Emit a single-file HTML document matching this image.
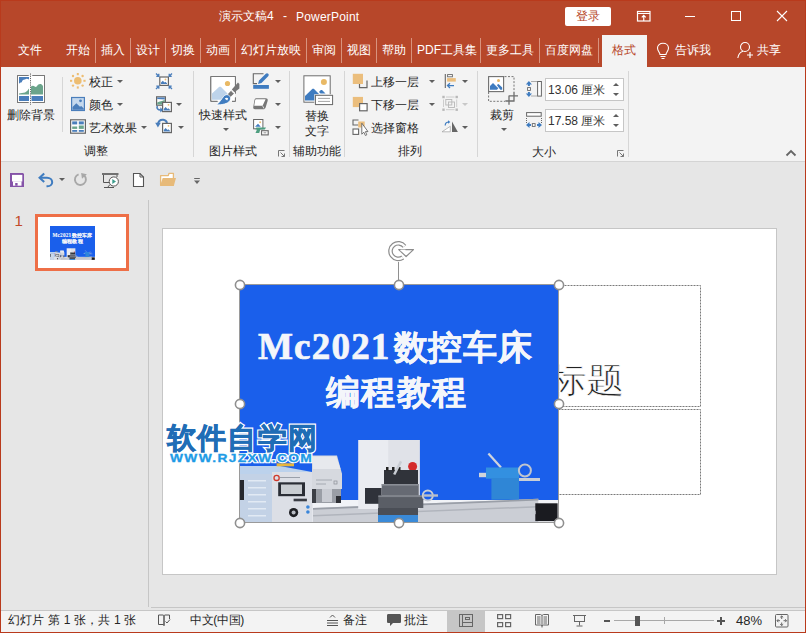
<!DOCTYPE html>
<html><head><meta charset="utf-8">
<style>
*{box-sizing:border-box}
html,body{margin:0;padding:0}
body{width:806px;height:633px;position:relative;overflow:hidden;background:#B93A1C;font-family:"Liberation Sans",sans-serif;font-size:12px;color:#262626}
.a{position:absolute}
.t{position:absolute;white-space:nowrap;line-height:1}
.w{color:#fff}
.sep{position:absolute;width:1px;background:#D8937E;top:38px;height:25px}
.gsep{position:absolute;width:1px;background:#D6D6D6}
.dd{position:absolute;width:0;height:0;border-left:3px solid transparent;border-right:3px solid transparent;border-top:3px solid #5E5E5E;margin-left:-0.5px}
.du{position:absolute;width:0;height:0;border-left:3px solid transparent;border-right:3px solid transparent;border-bottom:3px solid #5E5E5E}
.lbl{position:absolute;white-space:nowrap;line-height:1;color:#262626}
</style></head><body>
<!-- title bar -->
<div class="a" style="left:1px;top:1px;width:804px;height:66px;background:#B7472A"></div>
<div class="t w" style="left:219px;top:10px;font-size:12px">演示文稿4</div>
<div class="t w" style="left:283px;top:10px;font-size:12px">-</div>
<div class="t w" style="left:296px;top:11px;font-size:12px;letter-spacing:0.2px">PowerPoint</div>
<div class="a" style="left:565px;top:7px;width:46px;height:19px;background:#fff;border-radius:2px"></div>
<div class="t" style="left:576px;top:10px;font-size:12px;color:#B7472A">登录</div>
<!-- tabs -->
<div id="tabs">
<div class="t w" style="left:18px;top:44px">文件</div>
<div class="t w" style="left:66px;top:44px">开始</div>
<div class="sep" style="left:95px"></div>
<div class="t w" style="left:101px;top:44px">插入</div>
<div class="sep" style="left:130px"></div>
<div class="t w" style="left:136px;top:44px">设计</div>
<div class="sep" style="left:165px"></div>
<div class="t w" style="left:171px;top:44px">切换</div>
<div class="sep" style="left:200px"></div>
<div class="t w" style="left:206px;top:44px">动画</div>
<div class="sep" style="left:235px"></div>
<div class="t w" style="left:241px;top:44px">幻灯片放映</div>
<div class="sep" style="left:306px"></div>
<div class="t w" style="left:312px;top:44px">审阅</div>
<div class="sep" style="left:341px"></div>
<div class="t w" style="left:347px;top:44px">视图</div>
<div class="sep" style="left:376px"></div>
<div class="t w" style="left:382px;top:44px">帮助</div>
<div class="sep" style="left:411px"></div>
<div class="t w" style="left:417px;top:44px">PDF工具集</div>
<div class="sep" style="left:480px"></div>
<div class="t w" style="left:486px;top:44px">更多工具</div>
<div class="sep" style="left:539px"></div>
<div class="t w" style="left:545px;top:44px">百度网盘</div>
<div class="sep" style="left:598px"></div>
<div class="a" style="left:602px;top:35px;width:45px;height:32px;background:#F3F3F3"></div>
<div class="t" style="left:612px;top:44px;color:#B7472A">格式</div>
<div class="t w" style="left:675px;top:44px">告诉我</div>
<div class="t w" style="left:757px;top:44px">共享</div>
</div>
<!-- ribbon -->
<div class="a" style="left:1px;top:67px;width:804px;height:94px;background:#F3F3F3"></div>
<div class="a" style="left:1px;top:161px;width:804px;height:1px;background:#D4D4D4"></div>

<!-- ribbon labels -->
<div class="t" style="left:7px;top:109px">删除背景</div>
<div class="gsep" style="left:62px;top:77px;height:55px"></div>
<div class="t" style="left:89px;top:76px">校正</div><div class="dd" style="left:117px;top:80px"></div>
<div class="t" style="left:89px;top:99px">颜色</div><div class="dd" style="left:117px;top:103px"></div>
<div class="t" style="left:89px;top:122px">艺术效果</div><div class="dd" style="left:141px;top:126px"></div>
<div class="dd" style="left:176px;top:103px"></div>
<div class="dd" style="left:178px;top:126px"></div>
<div class="lbl" style="left:84px;top:145px">调整</div>
<div class="gsep" style="left:193px;top:71px;height:86px"></div>
<div class="t" style="left:199px;top:109px">快速样式</div><div class="dd" style="left:223px;top:128px"></div>
<div class="dd" style="left:275px;top:80px"></div>
<div class="dd" style="left:275px;top:103px"></div>
<div class="dd" style="left:275px;top:126px"></div>
<div class="lbl" style="left:209px;top:145px">图片样式</div>
<div class="gsep" style="left:289px;top:71px;height:86px"></div>
<div class="t" style="left:305px;top:110px">替换</div>
<div class="t" style="left:305px;top:125px">文字</div>
<div class="lbl" style="left:293px;top:145px">辅助功能</div>
<div class="gsep" style="left:344px;top:71px;height:86px"></div>
<div class="t" style="left:371px;top:76px">上移一层</div><div class="dd" style="left:429px;top:80px"></div>
<div class="t" style="left:371px;top:99px">下移一层</div><div class="dd" style="left:429px;top:103px"></div>
<div class="t" style="left:371px;top:122px">选择窗格</div>
<div class="dd" style="left:462px;top:80px"></div>
<div class="dd" style="left:462px;top:103px;border-top-color:#C8C8C8"></div>
<div class="dd" style="left:462px;top:126px"></div>
<div class="lbl" style="left:398px;top:145px">排列</div>
<div class="gsep" style="left:477px;top:71px;height:86px"></div>
<div class="t" style="left:490px;top:109px">裁剪</div><div class="dd" style="left:501px;top:128px"></div>
<div class="a" style="left:545px;top:78px;width:79px;height:23px;background:#fff;border:1px solid #C6C6C6"></div>
<div class="a" style="left:545px;top:109px;width:79px;height:23px;background:#fff;border:1px solid #C6C6C6"></div>
<div class="t" style="left:548px;top:84px;color:#333">13.06 厘米</div>
<div class="t" style="left:548px;top:115px;color:#333">17.58 厘米</div>
<div class="lbl" style="left:532px;top:146px">大小</div>
<div class="gsep" style="left:628px;top:71px;height:86px"></div>

<div class="du" style="left:613px;top:83px"></div><div class="dd" style="left:613.5px;top:93px"></div>
<div class="du" style="left:613px;top:114px"></div><div class="dd" style="left:613.5px;top:124px"></div>
<svg class="a" style="left:616px;top:149px" width="10" height="10" viewBox="0 0 10 10"><path d="M1.5 7.5V1.5H7.5" fill="none" stroke="#777" stroke-width="1"/><path d="M3.5 3.5L7.5 7.5M4.5 7.5H7.5V4.5" fill="none" stroke="#777" stroke-width="1"/></svg>
<svg class="a" style="left:277px;top:149px" width="10" height="10" viewBox="0 0 10 10"><path d="M1.5 7.5V1.5H7.5" fill="none" stroke="#777" stroke-width="1"/><path d="M3.5 3.5L7.5 7.5M4.5 7.5H7.5V4.5" fill="none" stroke="#777" stroke-width="1"/></svg>
<svg class="a" style="left:784px;top:147px" width="14" height="12" viewBox="0 0 14 12"><path d="M2.5 8.5L7 4L11.5 8.5" fill="none" stroke="#666" stroke-width="1.8"/></svg>
<!-- ribbon icons -->
<svg class="a" style="left:14px;top:71px" width="34" height="36" viewBox="0 0 34 36">
<path d="M14.5 4.5H3.5V31.5H14.5M18.5 4.5H30.5V31.5H18.5" fill="#fff" stroke="#777" stroke-width="1"/>
<rect x="4" y="5" width="26" height="26" fill="#fff"/>
<path d="M3.5 4.5H14.5M18.5 4.5H30.5V31.5H18.5M14.5 31.5H3.5V4.5" fill="none" stroke="#777" stroke-width="1"/>
<path d="M5 6H15V8.5C13.5 7.5 12 7.6 11 8.5C9.5 8.2 8 9.5 7.8 11.2C6.5 11.3 5.5 12 5 13Z" fill="#4A7EBB"/>
<path d="M5 23.6V22.6C7 21.8 9 21.8 11 21.4C13 20.5 14 19 15 17.5V23.6Z" fill="#6BA48B"/>
<path d="M17 23.6V15.5C18.5 14.3 20 14.8 21 15.8C22.5 16.2 23 15 24 13.8C25.5 12.6 27.5 12.8 28.3 14.2C29 14.5 29 15 29 16V23.6Z" fill="#6BA48B"/>
<rect x="5" y="25" width="10" height="5" fill="#4A7EBB"/><rect x="17.5" y="25" width="11.5" height="5" fill="#4A7EBB"/>
<path d="M16.5 2.5V34" stroke="#666" stroke-width="1" stroke-dasharray="1.2 1"/>
</svg>
<svg class="a" style="left:66px;top:70px" width="24" height="68" viewBox="0 0 24 68">
<g fill="#EDBD72"><circle cx="11.8" cy="10.8" r="3.8"/>
<rect x="10.8" y="3" width="2" height="2.2"/><rect x="10.8" y="16.4" width="2" height="2.2"/><rect x="4" y="9.8" width="2.2" height="2"/><rect x="17.4" y="9.8" width="2.2" height="2"/>
<circle cx="7" cy="6" r="1.2"/><circle cx="16.6" cy="6" r="1.2"/><circle cx="7" cy="15.6" r="1.2"/><circle cx="16.6" cy="15.6" r="1.2"/></g>
<rect x="5.6" y="27.5" width="12.8" height="13" fill="#C5D9EE" stroke="#4A7EBB" stroke-width="1.2"/>
<circle cx="14.5" cy="30.8" r="1.4" fill="#4A7EBB"/>
<path d="M6.5 39.8V37L10.3 33.2L14 36.8L15.2 36L17.8 38.5V39.8Z" fill="#4A7EBB"/>
<rect x="4.6" y="49.8" width="14.8" height="13.4" fill="#fff" stroke="#666" stroke-width="1.2"/>
<rect x="6.2" y="51.4" width="5" height="3" fill="#4A7EBB"/><rect x="12.8" y="51.4" width="5" height="3" fill="#4A7EBB"/>
<rect x="6.2" y="56.5" width="5" height="2.4" fill="#6BA48B"/><rect x="12.8" y="55.5" width="5" height="3.4" fill="#6BA48B"/>
<rect x="6.2" y="60" width="5" height="1.8" fill="#4A7EBB"/><rect x="12.8" y="60" width="5" height="1.8" fill="#4A7EBB"/>
</svg>
<svg class="a" style="left:152px;top:70px" width="34" height="68" viewBox="0 0 34 68">
<rect x="7.8" y="7" width="8.6" height="8.4" fill="#fff" stroke="#666" stroke-width="1.2"/>
<circle cx="13.5" cy="9.5" r="0.9" fill="#EDBD72"/><path d="M9 14V12.5L10.8 10.8L12.5 12.4L13.3 11.8L15 13.2V14Z" fill="#4A7EBB"/>
<g stroke="#4A7EBB" stroke-width="1.3" fill="none"><path d="M4 3.5L6.8 6.3M4.3 6.3H6.8V3.8"/><path d="M20 3.5L17.2 6.3M19.7 6.3H17.2V3.8"/><path d="M4 19L6.8 16.2M4.3 16.2H6.8V18.7"/><path d="M20 19L17.2 16.2M19.7 16.2H17.2V18.7"/></g>
<rect x="4.6" y="26.8" width="8.8" height="8.4" fill="#fff" stroke="#666" stroke-width="1.2"/>
<path d="M5.2 29V27.4H12.8V29.5Z" fill="#4A7EBB"/><path d="M5.2 34.6V32.5C7.5 31.5 10 31.5 12.8 29.8V34.6Z" fill="#6BA48B"/>
<rect x="10.6" y="32.4" width="8.8" height="9.2" fill="#fff" stroke="#666" stroke-width="1.2"/>
<circle cx="16.5" cy="34.8" r="0.9" fill="#EDBD72"/><path d="M11.8 40.5V39L13.6 37L15.5 39L16.3 38.3L18.2 40V40.5Z" fill="#4A7EBB"/>
<path d="M5.3 36C4.3 38.5 6 40.2 9 40" stroke="#4A7EBB" stroke-width="1.6" fill="none"/><path d="M8.3 37.3L11.2 40L8.3 42.6Z" fill="#4A7EBB"/>
<path d="M5.8 54.5C6.3 51 8.8 49.6 11.3 49.8C13.3 50 14.5 51.2 15 53" stroke="#4A7EBB" stroke-width="2" fill="none"/><path d="M3.2 52.8L5.9 57.6L8.8 52.8Z" fill="#4A7EBB"/>
<rect x="10.6" y="53.4" width="8.8" height="9.2" fill="#fff" stroke="#666" stroke-width="1.2"/>
<circle cx="16.5" cy="55.8" r="0.9" fill="#EDBD72"/><path d="M11.8 61.5V60L13.6 58L15.5 60L16.3 59.3L18.2 61V61.5Z" fill="#4A7EBB"/>
</svg>
<svg class="a" style="left:205px;top:70px" width="40" height="38" viewBox="0 0 40 38">
<path d="M12.5 31.3H5.8V6.5H30.4V23.5M30.4 27.5V31.3H27" fill="#fff" stroke="#777" stroke-width="1"/>
<rect x="6.3" y="7" width="23.6" height="23.8" fill="#fff"/>
<path d="M12.5 31.3H5.8V6.5H30.4V23.5M30.4 27.5V31.3H27" fill="none" stroke="#777" stroke-width="1"/>
<circle cx="22.5" cy="13.5" r="2.6" fill="#E9B965"/>
<path d="M7 29.8V23.5L14.3 16.8H15.8L22.5 23.5L20 27.5L17.5 29.8Z" fill="#BDD3EA"/>
<path d="M33 12.6L34.4 14V18.5L29.5 22.2L26.8 19.6Z" fill="#777"/><path d="M26.3 20.6L29 23.4L25.2 27.2L22.5 24.5Z" fill="#777"/><path d="M26.3 20.6L29 23.4" stroke="#fff" stroke-width="1"/>
<path d="M23 24.8C25.5 25.8 26.3 28.5 24.8 30.8C22.8 33.8 17.5 34.9 11.5 34.9C14.5 32.5 16.5 29 18.5 26.5C19.8 25 21.3 24.3 23 24.8Z" fill="#3F7CC0" stroke="#fff" stroke-width="0.8"/>
<path d="M19.8 28.8C20.5 27.6 22.3 27.4 23.2 28.5L22.2 30.5Z" fill="#fff"/>
</svg>
<svg class="a" style="left:248px;top:70px" width="38" height="68" viewBox="0 0 38 68">
<path d="M15.5 3.8H5.3V13.6H9" fill="none" stroke="#666" stroke-width="1.1"/>
<path d="M10 14L11 10.5L17.8 3.8C18.5 3.1 19.6 3.1 20.2 3.8C20.9 4.5 20.9 5.5 20.2 6.2L13.5 13Z" fill="#3F7CC0"/>
<rect x="5.2" y="15" width="15.7" height="3.8" fill="#3F7CC0"/>
<path d="M8 28.2H17.8C19.6 28.2 20 29.5 19.6 31L17.6 37.6C17.2 39 16.3 39.3 15 39.3H7C5.5 39.3 5 38.3 5.3 36.8L6.3 30.8C6.6 29 7 28.2 8 28.2Z" fill="#777"/>
<path d="M8.2 29.3H17.6L14.6 35.8H6.2L7 31C7.2 29.8 7.5 29.3 8.2 29.3Z" fill="#fff"/>
<path d="M14.6 35.8L16 38.5" stroke="#eee" stroke-width="0.8"/>
<rect x="5.6" y="49.5" width="9.3" height="9.3" fill="#fff" stroke="#666" stroke-width="1"/>
<circle cx="12.1" cy="52.2" r="1" fill="#EDBD72"/><path d="M7 56.8L10 53.8L12.8 56.8Z" fill="#3F7CC0"/>
<path d="M8.3 57.6H18L16.8 59.6H12.3L11.2 63H7.5L9 59.6H7.5Z" fill="#4E9E80"/>
<rect x="13.6" y="60.7" width="6.6" height="4.2" fill="#fff" stroke="#666" stroke-width="1.1"/><path d="M15.5 62.8H18.3" stroke="#888" stroke-width="0.9"/>
</svg>
<svg class="a" style="left:298px;top:70px" width="40" height="38" viewBox="0 0 40 38">
<rect x="5.9" y="5.8" width="26.3" height="26.4" fill="#fff" stroke="#6E6E6E" stroke-width="1"/>
<circle cx="25.9" cy="11.9" r="3" fill="#E9B965"/>
<path d="M7 30.6V26L14.5 18.7H15.8L21.5 24.5V30.6Z" fill="#3F7CC0"/>
<path d="M21 22L22.8 20H24L27.5 23.5H22.5Z" fill="#3F7CC0"/>
<rect x="16.3" y="24.2" width="19.4" height="11.5" fill="#fff"/>
<rect x="17.4" y="25.3" width="17.2" height="9.3" fill="#fff" stroke="#6E6E6E" stroke-width="1.1"/>
<path d="M20 28.4H32M20 31.4H32" stroke="#9A9A9A" stroke-width="0.9"/>
</svg>
<svg class="a" style="left:348px;top:70px" width="24" height="68" viewBox="0 0 24 68">
<path d="M19 10.5V17.6H11.5V14" fill="none" stroke="#666" stroke-width="1.2"/>
<rect x="4.8" y="3.8" width="10.2" height="10.2" fill="#EBBE7D"/>
<rect x="4.8" y="26.9" width="10.2" height="10.2" fill="#EBBE7D"/>
<rect x="11.6" y="33.6" width="7.5" height="7.2" fill="#fff" stroke="#666" stroke-width="1.2"/>
<path d="M10.5 50H5V55H10.5" fill="none" stroke="#666" stroke-width="1.1"/>
<rect x="5" y="59" width="5.6" height="5.4" fill="#fff" stroke="#666" stroke-width="1.1"/>
<rect x="10.2" y="51.5" width="6.5" height="6" fill="#EBBE7D"/>
<path d="M13.8 53.2V64.2L15.8 62.2L17.4 65.5L18.8 64.8L17.4 61.6H20Z" fill="#fff" stroke="#666" stroke-width="0.9" stroke-linejoin="round"/>
</svg>
<svg class="a" style="left:438px;top:70px" width="34" height="68" viewBox="0 0 34 68">
<path d="M7.3 4V18" stroke="#666" stroke-width="1.1"/>
<rect x="9.6" y="4.6" width="4.8" height="2.2" fill="#fff" stroke="#666" stroke-width="0.9"/>
<rect x="9.1" y="8.1" width="8.7" height="3.5" fill="#EBBE7D"/>
<path d="M16 15.6H9.5M12 13.2L9.5 15.6L12 18" stroke="#3F7CC0" stroke-width="1.3" fill="none"/>
<g fill="#B8B8B8"><rect x="4.3" y="25.8" width="2.4" height="2.4"/><rect x="17.5" y="25.8" width="2.4" height="2.4"/><rect x="4.3" y="38.5" width="2.4" height="2.4"/><rect x="17.5" y="38.5" width="2.4" height="2.4"/></g>
<path d="M8 27H16.5M8 39.7H16.5M5.5 29.5V37M18.7 29.5V37" stroke="#C8C8C8" stroke-width="0.9"/>
<rect x="7.8" y="29.5" width="6" height="5.5" fill="none" stroke="#B8B8B8" stroke-width="0.9"/><rect x="10.5" y="32" width="6" height="5.5" fill="none" stroke="#B8B8B8" stroke-width="0.9"/>
<path d="M7.2 55.5C7.2 53 8.5 52 11 52" stroke="#3F7CC0" stroke-width="1.2" fill="none"/><path d="M10 50.3L12.3 52L10 53.8Z" fill="#3F7CC0"/>
<path d="M4 61.8L12.3 56.3V61.8Z" fill="#fff" stroke="#AAA" stroke-width="0.8"/>
<path d="M14 51.5L19.9 61.9H14Z" fill="#666"/>
</svg>
<svg class="a" style="left:484px;top:72px" width="38" height="36" viewBox="0 0 38 36">
<path d="M4.6 20V29.3H21M20.5 4.6H30V20" fill="none" stroke="#777" stroke-width="1" stroke-dasharray="2 1.5"/>
<rect x="4.6" y="4.6" width="15" height="15" fill="#fff" stroke="#6E6E6E" stroke-width="1.1"/>
<circle cx="14.5" cy="8.4" r="1.5" fill="#E9B965"/>
<path d="M6 17.8V14L9 11L14.3 16.3L13 17.8Z" fill="#3F7CC0"/><path d="M12.8 13L14.5 12L18.2 15.5V17.8H16.3Z" fill="#3F7CC0"/>
<path d="M25 23.9H34M21.3 29H30.5M30 20V29.5M25 23.5V32.7" stroke="#6E6E6E" stroke-width="1.3" fill="none"/>
</svg>
<svg class="a" style="left:522px;top:76px" width="24" height="58" viewBox="0 0 24 58">
<rect x="15.6" y="5.5" width="3.8" height="14.6" fill="#fff" stroke="#666" stroke-width="1"/>
<path d="M9.5 5.5H15M9.5 20H15" stroke="#666" stroke-width="1" stroke-dasharray="1 1"/>
<path d="M6.9 5L3.8 8.5H5.9V10H7.9V8.5H10Z" fill="#3F7CC0"/><path d="M6.9 21L3.8 17.5H5.9V16H7.9V17.5H10Z" fill="#3F7CC0"/>
<rect x="5.6" y="11.6" width="2.8" height="2.8" fill="#fff" stroke="#666" stroke-width="0.9"/>
<rect x="4.6" y="36.6" width="14.6" height="3.6" fill="#fff" stroke="#666" stroke-width="1"/>
<path d="M4.5 42V47M19.5 42V47" stroke="#666" stroke-width="1" stroke-dasharray="1 1"/>
<path d="M4 49L7.5 46V48H9V50H7.5V52Z" fill="#3F7CC0"/><path d="M20 49L16.5 46V48H15V50H16.5V52Z" fill="#3F7CC0"/>
<rect x="10.3" y="47.6" width="2.8" height="2.8" fill="#fff" stroke="#666" stroke-width="0.9"/>
</svg>
<!-- main gray -->
<div class="a" style="left:1px;top:162px;width:804px;height:448px;background:#E6E6E6"></div>
<div class="a" style="left:148px;top:200px;width:1px;height:407px;background:#C6C6C6"></div>
<div class="a" style="left:151px;top:607px;width:654px;height:1px;background:#C6C6C6"></div>
<div class="a" style="left:1px;top:610px;width:804px;height:1px;background:#C6C6C6"></div>


<!-- slide -->
<div class="a" style="left:162px;top:228px;width:615px;height:347px;background:#fff;border:1px solid #C6C6C6"></div>
<!-- slide content -->
<svg class="a" style="left:239px;top:284px" width="464" height="213" viewBox="0 0 464 213"><g fill="none" stroke="#7A7A7A" stroke-width="1" stroke-dasharray="2 1"><rect x="1.5" y="1.5" width="460" height="121"/><rect x="1.5" y="125.5" width="460" height="85"/></g></svg>

<div class="t" style="left:547.5px;top:363px;font-size:34px;color:#222;-webkit-text-stroke:0.7px #fff;transform:scaleX(1.13);transform-origin:0 0">标题</div>
<svg class="a" style="left:240px;top:284px" width="319" height="238" viewBox="0 0 319 238">
<g id="pic">
<rect width="319" height="238" fill="#1A5FEB"/>
<!-- floor -->
<rect x="0" y="216" width="319" height="22" fill="#F1F3F7"/>
<!-- bed -->
<path d="M73 224L298.3 214.8V238H73Z" fill="#CBCED5"/>
<path d="M73 224L298.3 214.8V216.6L73 225.8Z" fill="#9A9FA8"/>
<path d="M73 231L298 222V223.5L73 232.5Z" fill="#B0B4BC"/>
<!-- right motor -->
<rect x="295.3" y="219.3" width="22.3" height="17.8" fill="#1A1B20"/>
<rect x="291.6" y="226.7" width="4" height="3.5" fill="#C8CCD2"/>
<!-- headstock -->
<path d="M0 182H40L72 188V191H0Z" fill="#BCD2EC"/>
<rect x="0" y="190" width="32" height="48" fill="#C3D2E6"/>
<g fill="#E2EAF4"><rect x="8" y="196" width="18" height="1.5"/><rect x="8" y="203" width="18" height="1.5"/><rect x="8" y="210" width="18" height="1.5"/><rect x="8" y="217" width="18" height="1.5"/><rect x="8" y="224" width="18" height="1.5"/><rect x="8" y="231" width="18" height="1.5"/></g>
<rect x="0" y="196" width="4" height="20" fill="#26282E"/>
<rect x="32" y="188" width="40.6" height="50" fill="#DCDFE6"/>
<rect x="36.6" y="179.3" width="17.4" height="3" fill="#E8B53C"/>
<circle cx="36.6" cy="193.9" r="2.6" fill="none" stroke="#D03A2C" stroke-width="1.3"/>
<path d="M40 193.5H60" stroke="#9AA0AA" stroke-width="1"/>
<rect x="38.2" y="198.3" width="26.8" height="13.9" fill="#2A2D35"/>
<rect x="41" y="200.5" width="21" height="9.5" fill="#C9CDD2"/>
<rect x="53.6" y="214.7" width="13.3" height="2.6" fill="#3A3D45"/>
<circle cx="53.6" cy="228.6" r="4.6" fill="#1E1F24"/><circle cx="53.6" cy="228.6" r="2" fill="#B8BCC4"/>
<circle cx="67.9" cy="223" r="1.8" fill="#3A86DA"/><circle cx="67.9" cy="228" r="1.8" fill="#3A86DA"/>
<!-- gear cover -->
<path d="M72 171.5H97L102 189.7V205H72Z" fill="#D6D9DF"/>
<path d="M73 172.5H96.3L100.5 185H73Z" fill="#E7E9ED"/>
<path d="M76 196H92M76 200H86" stroke="#9A9EA6" stroke-width="0.8"/>
<rect x="94" y="197" width="3" height="3" fill="none" stroke="#8A8E96" stroke-width="0.7"/>
<rect x="72" y="205" width="29" height="14" fill="#9A9EA6"/>
<rect x="72" y="205" width="4" height="14" fill="#3C3F46"/>
<rect x="82" y="205" width="10" height="13" fill="#C9CCD3"/>
<rect x="96" y="212" width="5" height="7" fill="#2E3036"/>
<!-- cabinet -->
<rect x="118.2" y="156" width="31" height="69" fill="#EAECF1"/>
<rect x="148.2" y="156" width="31.7" height="69" fill="#E0E2E8"/>
<rect x="125" y="204" width="16.6" height="15.8" fill="#2F323A"/>
<circle cx="172.6" cy="182.5" r="4.5" fill="#D42A2A"/>
<!-- carriage -->
<rect x="171.5" y="186" width="2" height="6" fill="#222"/>
<rect x="144" y="186" width="34" height="14" fill="#30333A"/>
<rect x="146" y="183" width="2.5" height="3.5" fill="#222"/><rect x="152" y="183" width="2.5" height="3.5" fill="#222"/><rect x="158" y="183" width="2.5" height="3.5" fill="#222"/>
<path d="M161 177.4L154.2 190.5" stroke="#C9CDD4" stroke-width="2.5"/>
<rect x="141.7" y="200" width="37" height="11.5" fill="#666A73"/>
<rect x="141.7" y="200" width="37" height="1.6" fill="#8A8E96"/>
<rect x="138.3" y="211.5" width="45" height="12.5" fill="#5A5E66"/>
<rect x="138.3" y="211.5" width="45" height="1.6" fill="#80848C"/>
<rect x="138" y="224" width="40" height="7" fill="#4A4E56"/>
<rect x="138" y="231" width="40" height="7" fill="#3A8AD8"/>
<circle cx="187.8" cy="211.5" r="5" fill="none" stroke="#C9CDD4" stroke-width="2"/>
<rect x="183" y="210.3" width="15" height="2.4" fill="#B9BEC8"/>
<!-- tailstock -->
<path d="M248.4 169.4L261 183.5" stroke="#D0D4DC" stroke-width="2.2"/>
<rect x="246" y="183.5" width="33" height="11.2" fill="#3390E0"/>
<rect x="251.4" y="194" width="27.6" height="21.6" fill="#2F86D6"/>
<rect x="239" y="188.8" width="7" height="4.4" fill="#D0D4DA"/>
<circle cx="284.9" cy="186.5" r="6" fill="none" stroke="#C0C5CE" stroke-width="2"/>
<rect x="279" y="194" width="21" height="3" fill="#C9CED6"/>
<!-- title text -->
<text x="18" y="75" font-family="Liberation Serif" font-weight="bold" font-size="37" letter-spacing="1.2" fill="#F4F6FA" stroke="#F4F6FA" stroke-width="0.7">Mc2021</text>
<text x="153.5" y="74.5" font-family="Liberation Sans" font-weight="bold" font-size="34" letter-spacing="0.8" fill="#F4F6FA" stroke="#F4F6FA" stroke-width="0.3">数控车床</text>
<text x="85.5" y="120" font-family="Liberation Sans" font-weight="bold" font-size="34" letter-spacing="1.6" fill="#F4F6FA" stroke="#F4F6FA" stroke-width="0.3">编程教程</text>
</g>
</svg>
<!-- picture outline + handles -->
<div class="a" style="left:239px;top:284px;width:320px;height:239px;border:1px solid #9A9A9A"></div>
<div class="a" style="left:398px;top:262px;width:1px;height:18px;background:#909090"></div>
<svg class="a" style="left:386px;top:239px" width="30" height="24" viewBox="0 0 30 24">
<path d="M18.45 7.3A7.8 7.8 0 1 0 16.77 18.5" fill="none" stroke="#8C8C8C" stroke-width="4.6"/>
<path d="M18.45 7.3A7.8 7.8 0 1 0 16.77 18.5" fill="none" stroke="#fff" stroke-width="2.2"/>
<path d="M12.7 10.6H27.5L20.1 17.5Z" fill="#fff" stroke="#8C8C8C" stroke-width="1.2" stroke-linejoin="round"/>
<path d="M14.5 11.4L19.5 11.4" stroke="#fff" stroke-width="1.6"/>
</svg>
<div class="t" style="left:167px;top:424px;font-size:29px;letter-spacing:1.2px;font-weight:bold;color:#fff;-webkit-text-stroke:3px #fff">软件自学网</div>
<div class="t" style="left:167px;top:424px;font-size:29px;letter-spacing:1.2px;font-weight:bold;color:#1F6DB6;-webkit-text-stroke:0.6px #1F6DB6">软件自学网</div>
<div class="t" style="left:170px;top:454px;font-size:11px;font-weight:bold;color:#fff;letter-spacing:1.1px;-webkit-text-stroke:2.5px #fff;transform:scale(1.25,0.93);transform-origin:0 0">WWW.RJZXW.COM</div>
<div class="t" style="left:170px;top:454px;font-size:11px;font-weight:bold;color:#1E9BE6;letter-spacing:1.1px;-webkit-text-stroke:0.3px #1E9BE6;transform:scale(1.25,0.93);transform-origin:0 0">WWW.RJZXW.COM</div>
<svg class="a" style="left:232.5px;top:277.5px" width="14" height="14" viewBox="0 0 14 14"><circle cx="7" cy="7" r="4.6" fill="#fff" stroke="#8F8F8F" stroke-width="1.6"/></svg>
<svg class="a" style="left:391.5px;top:277.5px" width="14" height="14" viewBox="0 0 14 14"><circle cx="7" cy="7" r="4.6" fill="#fff" stroke="#8F8F8F" stroke-width="1.6"/></svg>
<svg class="a" style="left:551.5px;top:277.5px" width="14" height="14" viewBox="0 0 14 14"><circle cx="7" cy="7" r="4.6" fill="#fff" stroke="#8F8F8F" stroke-width="1.6"/></svg>
<svg class="a" style="left:232.5px;top:396.5px" width="14" height="14" viewBox="0 0 14 14"><circle cx="7" cy="7" r="4.6" fill="#fff" stroke="#8F8F8F" stroke-width="1.6"/></svg>
<svg class="a" style="left:551.5px;top:396.5px" width="14" height="14" viewBox="0 0 14 14"><circle cx="7" cy="7" r="4.6" fill="#fff" stroke="#8F8F8F" stroke-width="1.6"/></svg>
<svg class="a" style="left:232.5px;top:515.5px" width="14" height="14" viewBox="0 0 14 14"><circle cx="7" cy="7" r="4.6" fill="#fff" stroke="#8F8F8F" stroke-width="1.6"/></svg>
<svg class="a" style="left:391.5px;top:515.5px" width="14" height="14" viewBox="0 0 14 14"><circle cx="7" cy="7" r="4.6" fill="#fff" stroke="#8F8F8F" stroke-width="1.6"/></svg>
<svg class="a" style="left:551.5px;top:515.5px" width="14" height="14" viewBox="0 0 14 14"><circle cx="7" cy="7" r="4.6" fill="#fff" stroke="#8F8F8F" stroke-width="1.6"/></svg>
<!-- QAT -->
<svg class="a" style="left:9px;top:172px" width="16" height="16" viewBox="0 0 16 16">
<path d="M1 1H14L15 2V15H1Z" fill="#8553A8"/><rect x="3" y="2.9" width="10.3" height="6.6" fill="#fff"/><rect x="4" y="9.3" width="8.5" height="4.4" fill="#fff"/><rect x="6.2" y="11" width="2.4" height="2.7" fill="#8553A8"/>
</svg>
<svg class="a" style="left:37px;top:172px" width="18" height="16" viewBox="0 0 18 16">
<path d="M3.5 5.8H10C13 5.8 15.2 7.8 15.2 10.2C15.2 12.5 13.2 14.3 10.5 14.3H9.5" fill="none" stroke="#3F7CC0" stroke-width="2"/>
<path d="M7.2 1.5L2.6 5.8L7.2 10" fill="none" stroke="#3F7CC0" stroke-width="2.1"/>
</svg>
<div class="dd" style="left:59.5px;top:178px"></div>
<svg class="a" style="left:70px;top:168px" width="22" height="22" viewBox="0 0 22 22">
<path d="M8.6 6.3A5.5 5.5 0 1 0 14.2 7.5" fill="none" stroke="#A8A8A8" stroke-width="1.9"/>
<path d="M11.1 5L16.9 6.2L12 10.8Z" fill="#A8A8A8"/>
</svg>
<svg class="a" style="left:101px;top:172px" width="19" height="17" viewBox="0 0 19 17">
<rect x="1" y="1.2" width="16.5" height="1.6" fill="#555"/>
<path d="M2.5 3V10.5H8" fill="none" stroke="#555" stroke-width="1"/><path d="M16 3V5" stroke="#555" stroke-width="1"/>
<circle cx="12.8" cy="9.5" r="4.6" fill="#fff" stroke="#555" stroke-width="1"/>
<path d="M11.3 7V12L15 9.5Z" fill="#3C9C8C"/>
<path d="M9 12.5L6.5 15.5M7 15.5H11" stroke="#555" stroke-width="1"/><path d="M3 15.5H13" stroke="#555" stroke-width="1"/>
</svg>
<svg class="a" style="left:132px;top:172px" width="13" height="16" viewBox="0 0 13 16">
<path d="M1.5 1.5H8L11.5 5V14.5H1.5Z" fill="#fff" stroke="#555" stroke-width="1.1"/><path d="M8 1.5V5H11.5" fill="none" stroke="#555" stroke-width="1"/>
</svg>
<svg class="a" style="left:158px;top:171px" width="20" height="16" viewBox="0 0 20 16">
<path d="M2.6 14.3V4.6H10.3L11 2.3H15.4V14.3Z" fill="#fff" stroke="#E7BA79" stroke-width="1.3" stroke-linejoin="round"/>
<path d="M2 14.8L4.7 7H18L15.8 14.8Z" fill="#E7BA79"/>
</svg>
<svg class="a" style="left:193px;top:177px" width="8" height="8" viewBox="0 0 8 8"><path d="M1.2 1.5H6.8" stroke="#666" stroke-width="1"/><path d="M1 3.6H7L4 7Z" fill="#666"/></svg>

<!-- thumbnail pane -->
<div class="t" style="left:14.5px;top:212.5px;font-size:15px;color:#C24A2A">1</div>
<div class="a" style="left:35px;top:214px;width:94px;height:57px;border:3px solid #EE6F47;background:#fff"></div>
<svg class="a" style="left:49.5px;top:225.5px" width="45" height="34" viewBox="0 0 319 238" preserveAspectRatio="none"><use href="#pic"/></svg>
<!-- status -->
<div class="a" style="left:1px;top:611px;width:804px;height:21px;background:#F3F3F3"></div>

<!-- status bar content -->
<div class="t" style="left:8px;top:614px;color:#262626;letter-spacing:0.17px">幻灯片 第 1 张，共 1 张</div>
<svg class="a" style="left:157px;top:613px" width="14" height="14" viewBox="0 0 14 14">
<path d="M1.5 2H6C6.5 2 7 2.5 7 3V12.5C7 12 6.5 11.5 6 11.5H1.5Z" fill="none" stroke="#555" stroke-width="1"/>
<path d="M7 3C7 2.5 7.5 2 8 2H12.5V6" fill="none" stroke="#555" stroke-width="1"/><path d="M7 12.5V3" stroke="#555" stroke-width="1"/>
<path d="M8.5 8.5L10 10L13 6.5" fill="none" stroke="#555" stroke-width="1"/>
</svg>
<div class="t" style="left:190px;top:614px;color:#262626;letter-spacing:-0.35px">中文(中国)</div>
<svg class="a" style="left:326px;top:613px" width="13" height="14" viewBox="0 0 13 14">
<path d="M4 4.5L6.5 2L9 4.5" fill="none" stroke="#555" stroke-width="1"/><path d="M1 7.5H12M1 10H12M1 12.5H12" stroke="#555" stroke-width="1"/>
</svg>
<div class="t" style="left:343px;top:614px;color:#262626">备注</div>
<svg class="a" style="left:386px;top:613px" width="16" height="15" viewBox="0 0 16 15">
<path d="M2.5 1H13.5C14.5 1 15 1.5 15 2.5V8.5C15 9.5 14.5 10 13.5 10H7L4 13V10H2.5C1.5 10 1 9.5 1 8.5V2.5C1 1.5 1.5 1 2.5 1Z" fill="#555"/>
</svg>
<div class="t" style="left:404px;top:614px;color:#262626">批注</div>
<div class="a" style="left:447px;top:611px;width:38px;height:21px;background:#C6C6C6"></div>
<svg class="a" style="left:455px;top:611px" width="60" height="20" viewBox="0 0 60 20">
<g fill="none" stroke="#666" stroke-width="1"><rect x="4.5" y="3.5" width="13" height="12"/><path d="M7.5 3.5V15.5M7.5 11.5H17.5"/><rect x="10.5" y="6.5" width="4" height="2"/></g>
<g fill="none" stroke="#666" stroke-width="1.2"><rect x="42.6" y="3.6" width="5" height="4"/><rect x="50.6" y="3.6" width="5" height="4"/><rect x="42.6" y="11.6" width="5" height="4"/><rect x="50.6" y="11.6" width="5" height="4"/></g>
</svg>
<svg class="a" style="left:534px;top:613px" width="16" height="15" viewBox="0 0 16 15">
<g fill="none" stroke="#666" stroke-width="1"><path d="M1.5 1.5H6.5L8 2.5L9.5 1.5H14.5V12H9.5L8 13L6.5 12H1.5Z"/><path d="M8 2.5V14.5"/><path d="M3 4H6.5M3 6H6.5M3 8H6.5M3 10H6.5M9.5 4H13M9.5 6H13M9.5 8H13M9.5 10H13"/></g>
</svg>
<svg class="a" style="left:572px;top:613px" width="15" height="15" viewBox="0 0 15 15">
<g fill="none" stroke="#666" stroke-width="1"><path d="M1 2.5H14"/><rect x="2.5" y="2.5" width="10" height="6"/><path d="M7.5 8.5V12.5M4.5 13H10.5"/></g>
</svg>
<div class="a" style="left:604px;top:620px;width:6px;height:2px;background:#555"></div>
<div class="a" style="left:614px;top:620px;width:100px;height:1px;background:#A8A8A8"></div>
<div class="a" style="left:664px;top:617px;width:1px;height:7px;background:#A8A8A8"></div>
<div class="a" style="left:635px;top:616px;width:5px;height:10px;background:#555"></div>
<div class="a" style="left:717px;top:620px;width:8px;height:2px;background:#555"></div>
<div class="a" style="left:720px;top:617px;width:2px;height:8px;background:#555"></div>
<div class="t" style="left:736px;top:614px;color:#262626;font-size:13px">48%</div>
<svg class="a" style="left:774px;top:613px" width="15" height="15" viewBox="0 0 15 15">
<g fill="none" stroke="#666" stroke-width="1"><rect x="1.5" y="1.5" width="12.5" height="12.5" rx="1"/><path d="M7.7 3V6M6.2 4.3L7.7 3L9.2 4.3M7.7 12.5V9.5M6.2 11.2L7.7 12.5L9.2 11.2M3 7.7H6M4.3 6.2L3 7.7L4.3 9.2M12.5 7.7H9.5M11.2 6.2L12.5 7.7L11.2 9.2"/></g>
</svg>
<!-- title bar icons -->
<svg class="a" style="left:636px;top:10px" width="16" height="12" viewBox="0 0 16 12">
<g fill="none" stroke="#fff" stroke-width="1.2"><rect x="1.5" y="1.5" width="12.5" height="9.5"/><path d="M1.5 3.5H14M7.75 11V5.5M5.8 7.3L7.75 5.3L9.7 7.3"/></g>
</svg>
<div class="a" style="left:685px;top:16px;width:10px;height:1px;background:#fff"></div>
<div class="a" style="left:731px;top:11px;width:10px;height:10px;border:1px solid #fff"></div>
<svg class="a" style="left:776px;top:10px" width="12" height="12" viewBox="0 0 12 12"><path d="M1 1L11 11M11 1L1 11" stroke="#fff" stroke-width="1.1"/></svg>
<svg class="a" style="left:655px;top:42px" width="16" height="18" viewBox="0 0 16 18">
<path d="M5 12.5C5 10.5 2.5 9 2.5 6C2.5 3.2 4.9 1.2 8 1.2C11.1 1.2 13.5 3.2 13.5 6C13.5 9 11 10.5 11 12.5Z" fill="none" stroke="#fff" stroke-width="1.1"/>
<path d="M5.5 14.5H10.5M6.5 16.5H9.5" stroke="#fff" stroke-width="1.1"/>
</svg>
<svg class="a" style="left:736px;top:41px" width="19" height="18" viewBox="0 0 19 18">
<circle cx="9" cy="6" r="4.5" fill="none" stroke="#fff" stroke-width="1.1"/>
<path d="M1.8 17C2.5 13 4.5 11 7 10.3" fill="none" stroke="#fff" stroke-width="1.1"/>
<path d="M14 11V17M11 14H17" stroke="#fff" stroke-width="1.2"/>
</svg>
</body></html>
